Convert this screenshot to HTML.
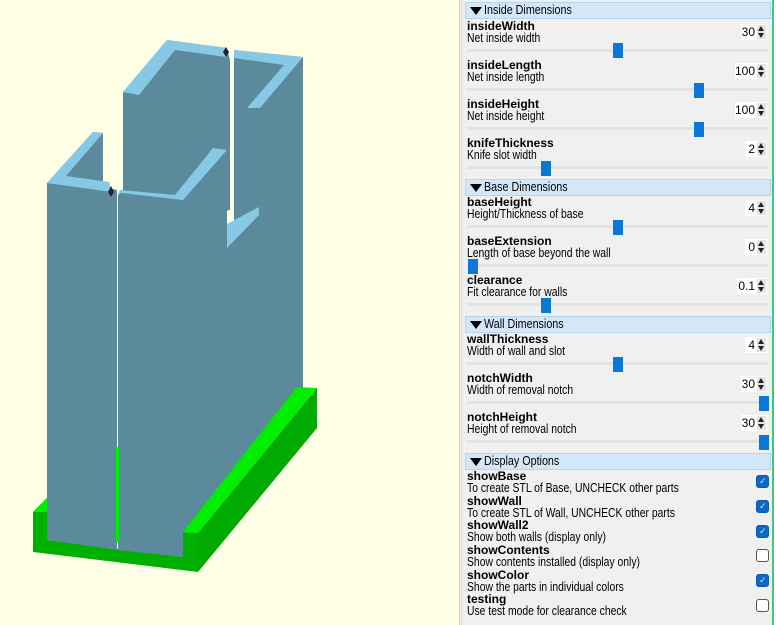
<!DOCTYPE html>
<html><head><style>
*{margin:0;padding:0;box-sizing:border-box}
body{width:776px;height:625px;background:#ffffe5;position:relative;overflow:hidden;font-family:"Liberation Sans",sans-serif;font-size:12px;color:#000}
#split{position:absolute;left:459px;top:0;width:4px;height:625px;background:#e6e6e6;border-left:1px solid #d0d0d0}
#panel{position:absolute;left:463px;top:0;width:310px;height:625px;background:#f0f0f0}
#edge{position:absolute;left:772px;top:0;width:2px;height:625px;background:#3fc87a}
#right{position:absolute;left:774px;top:0;width:2px;height:625px;background:#fff}
.hdr{position:absolute;left:465px;width:306px;height:17px;background:#d3e7f9;border:1px solid #b6d4ee;line-height:15px}
.hdr:before{content:"";position:absolute;left:4px;top:4px;border-left:6px solid transparent;border-right:6px solid transparent;border-top:8px solid #000}
.hdr span{position:absolute;left:18px;top:0;font-size:12.5px;white-space:nowrap;transform:scaleX(0.86);transform-origin:left}
.n{position:absolute;left:467px;font-weight:bold;line-height:13px}
.d{position:absolute;left:467px;line-height:13px;font-size:12.5px;white-space:nowrap;transform:scaleX(0.83);transform-origin:left}
.tr{position:absolute;left:467px;width:301px;height:3px;background:#e2e2e2}
.th{position:absolute;width:10px;height:15px;background:#0a78d7}
.sp{position:absolute;height:16px;background:#fff;text-align:right;padding-right:12px;line-height:16px;font-size:12px}
.sp i{position:absolute;right:1px;top:1px;width:9px;height:14px;background:#e4e4e4}
.sp i:before{content:"";position:absolute;left:1px;top:1px;border-left:3.5px solid transparent;border-right:3.5px solid transparent;border-bottom:5px solid #222}
.sp i:after{content:"";position:absolute;left:1px;top:8px;border-left:3.5px solid transparent;border-right:3.5px solid transparent;border-top:5px solid #222}
.cb{position:absolute;left:756px;width:13px;height:13px;border-radius:3px}
.on{background:#0f68c8;border:1px solid #0a58b0}
.on:after{content:"✓";color:#cfe3ff;font-size:9px;position:absolute;left:2px;top:0px;line-height:11px}
.off{background:#fff;border:1px solid #555}
</style></head><body>
<svg width="459" height="625" style="position:absolute;left:0;top:0">
<polygon points="33,512 47,498 47,540 183,557 183,532 198,533 198,572 33,552" fill="#00b000"/>
<polygon points="33,512 47,498 47,512" fill="#00ee00"/>
<polygon points="198,533 317,388 317,428 198,572" fill="#00aa00"/>
<polygon points="123,92 167,40 227,48 230,60 230,210 123,230" fill="#5b8a9c"/>
<polygon points="123,92 167,40 227,48 226,57 175,50 139,95" fill="#87c8e4"/>
<polygon points="234,50 303,57 303,390 234,390" fill="#5b8a9c"/>
<polygon points="234,50 303,57 260,108 247,108 284,65 234,58" fill="#87c8e4"/>
<polygon points="230,60 234,60 234,225 230,230" fill="#ffffe5"/>
<polygon points="183,200 227,150 227,248 234,240 303,240 303,388 297,387 195,532 183,532" fill="#5b8a9c"/>
<polygon points="227,224 259,207 259,215 227,248" fill="#87c8e4"/>
<polygon points="47,183 93,132 103,133 103,183 109,188 117,190 117,550 47,540" fill="#5b8a9c"/>
<polygon points="47,183 93,132 103,133 66,176 109,182 112,192" fill="#87c8e4"/>
<polygon points="118,195 120,190 175,195 213,148 227,150 183,199 183,557 118,550" fill="#5b8a9c"/>
<polygon points="118,195 120,190 175,195 213,148 227,150 183,200 121,193" fill="#87c8e4"/>
<polygon points="116,447 119,447 119,542 116,542" fill="#00ee00"/>
<polygon points="183,532 297,387 317,388 198,533" fill="#00ee00"/>
<polygon points="226,47 229,52 226,57 223,52" fill="#223"/>
<polygon points="111,186 114,192 111,197 108,192" fill="#223"/>
</svg>
<div id="split"></div><div id="panel"></div><div id="edge"></div><div id="right"></div>

<div class="hdr" style="top:2px"><span>Inside Dimensions</span></div>
<div class="n" style="top:20px">insideWidth</div><div class="d" style="top:32px">Net inside width</div>
<div class="sp" style="left:741px;top:24px;width:26px">30<i></i></div>
<div class="tr" style="top:49px"></div><div class="th" style="left:613px;top:43px"></div>
<div class="n" style="top:59px">insideLength</div><div class="d" style="top:71px">Net inside length</div>
<div class="sp" style="left:735px;top:63px;width:32px">100<i></i></div>
<div class="tr" style="top:88px"></div><div class="th" style="left:694px;top:83px"></div>
<div class="n" style="top:98px">insideHeight</div><div class="d" style="top:110px">Net inside height</div>
<div class="sp" style="left:735px;top:102px;width:32px">100<i></i></div>
<div class="tr" style="top:127px"></div><div class="th" style="left:694px;top:122px"></div>
<div class="n" style="top:137px">knifeThickness</div><div class="d" style="top:149px">Knife slot width</div>
<div class="sp" style="left:745px;top:141px;width:22px">2<i></i></div>
<div class="tr" style="top:166px"></div><div class="th" style="left:541px;top:161px"></div>

<div class="hdr" style="top:179px"><span>Base Dimensions</span></div>
<div class="n" style="top:196px">baseHeight</div><div class="d" style="top:208px">Height/Thickness of base</div>
<div class="sp" style="left:745px;top:200px;width:22px">4<i></i></div>
<div class="tr" style="top:225px"></div><div class="th" style="left:613px;top:220px"></div>
<div class="n" style="top:235px">baseExtension</div><div class="d" style="top:247px">Length of base beyond the wall</div>
<div class="sp" style="left:745px;top:239px;width:22px">0<i></i></div>
<div class="tr" style="top:264px"></div><div class="th" style="left:468px;top:259px"></div>
<div class="n" style="top:274px">clearance</div><div class="d" style="top:286px">Fit clearance for walls</div>
<div class="sp" style="left:737px;top:278px;width:30px">0.1<i></i></div>
<div class="tr" style="top:303px"></div><div class="th" style="left:541px;top:298px"></div>

<div class="hdr" style="top:316px"><span>Wall Dimensions</span></div>
<div class="n" style="top:333px">wallThickness</div><div class="d" style="top:345px">Width of wall and slot</div>
<div class="sp" style="left:745px;top:337px;width:22px">4<i></i></div>
<div class="tr" style="top:362px"></div><div class="th" style="left:613px;top:357px"></div>
<div class="n" style="top:372px">notchWidth</div><div class="d" style="top:384px">Width of removal notch</div>
<div class="sp" style="left:741px;top:376px;width:26px">30<i></i></div>
<div class="tr" style="top:401px"></div><div class="th" style="left:759px;top:396px"></div>
<div class="n" style="top:411px">notchHeight</div><div class="d" style="top:423px">Height of removal notch</div>
<div class="sp" style="left:741px;top:415px;width:26px">30<i></i></div>
<div class="tr" style="top:440px"></div><div class="th" style="left:759px;top:435px"></div>

<div class="hdr" style="top:453px"><span>Display Options</span></div>
<div class="n" style="top:470px">showBase</div><div class="d" style="top:482px">To create STL of Base, UNCHECK other parts</div><div class="cb on" style="top:475px"></div>
<div class="n" style="top:495px">showWall</div><div class="d" style="top:507px">To create STL of Wall, UNCHECK other parts</div><div class="cb on" style="top:500px"></div>
<div class="n" style="top:519px">showWall2</div><div class="d" style="top:531px">Show both walls (display only)</div><div class="cb on" style="top:525px"></div>
<div class="n" style="top:544px">showContents</div><div class="d" style="top:556px">Show contents installed (display only)</div><div class="cb off" style="top:549px"></div>
<div class="n" style="top:569px">showColor</div><div class="d" style="top:581px">Show the parts in individual colors</div><div class="cb on" style="top:574px"></div>
<div class="n" style="top:593px">testing</div><div class="d" style="top:605px">Use test mode for clearance check</div><div class="cb off" style="top:599px"></div>
</body></html>
